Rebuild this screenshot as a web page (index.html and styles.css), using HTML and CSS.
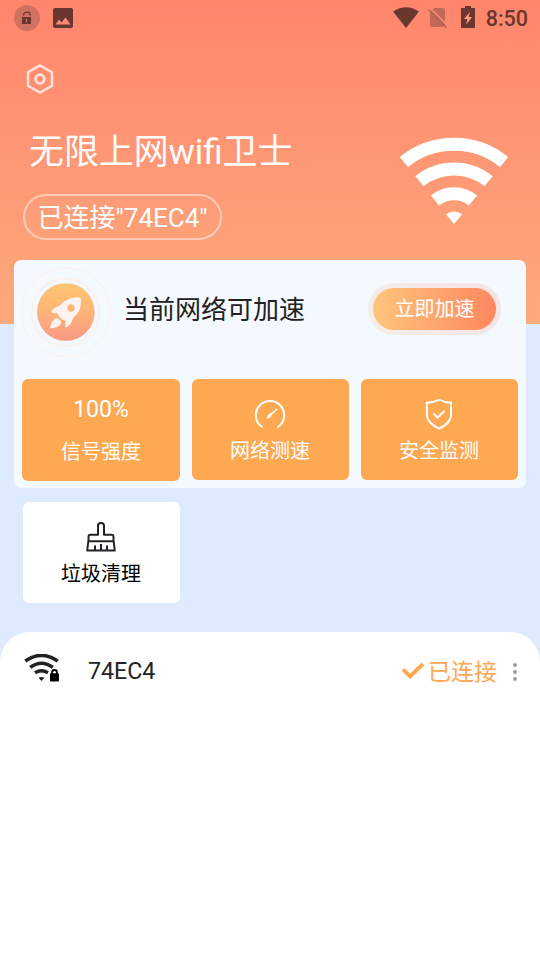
FILE: index.html
```html
<!DOCTYPE html>
<html lang="zh-CN">
<head>
<meta charset="utf-8">
<title>无限上网wifi卫士</title>
<link rel="stylesheet" href="styles.css">
</head>
<body>
<div class="screen">
  <header class="status">
    <svg class="status-lock" width="26" height="26" viewBox="0 0 26 26"><circle cx="13" cy="13" r="13" fill="#d07262"/><path d="M9.500 10.500v-.8a3.300 2.500 0 0 1 6.600 0v1" fill="none" stroke="#69372f" stroke-width="1.200"/><path d="M8 12h9v7H8z" fill="#69372f"/><path d="M12.500 14v3.500" stroke="#d07262" stroke-width="1.300"/></svg>
    <svg class="status-image" width="20" height="20" viewBox="0 0 20 20"><rect width="20" height="20" rx="2" fill="#69372f"/><path d="M2.500 16.500l3.500-5 2.500 3 4-5 5 7z" fill="#ff8a70"/></svg>
    <svg class="status-wifi" width="26" height="21" viewBox="0 0 26 21"><path d="M0 4.500Q13-4 26 4.500L13 21z" fill="#69372f"/></svg>
    <svg class="status-sim" width="20" height="21" viewBox="0 0 20 21"><path d="M6 0h9q2 0 2 2v15q0 2-2 2H4q-2 0-2-2V4z" fill="#c3695a"/><path d="M2 0l18 18" stroke="#ff896f" stroke-width="1.500"/><path d="M.5 1.500l18 18" stroke="#b86052" stroke-width="1.500"/></svg>
    <svg class="status-battery" width="14" height="22" viewBox="0 0 14 22"><path d="M0 2h4V0h6v2h4v20H0z" fill="#69372f"/><path d="M9 6L3 13h3.500l-1.500 6 6-8H7.500z" fill="#ff9a80"/></svg>
    <span class="clock">8:50</span>
  </header>

  <section class="hero">
    <div class="hero-copy">
      <svg class="settings" width="28" height="32" viewBox="0 0 28 32"><path d="M14 2.500l12 6.700v13.600l-12 6.700-12-6.700V9.200z" fill="none" stroke="#ffe2dc" stroke-width="2.500"/><circle cx="14" cy="16" r="4.300" fill="none" stroke="#ffe2dc" stroke-width="2.700"/></svg>
      <h1>无限上网wifi卫士</h1>
      <div class="connection">已连接"74EC4"</div>
    </div>
    <svg class="hero-wifi" width="110" height="88" viewBox="-55 -87 110 88"><g fill="none" stroke="#fff" stroke-width="13"><path d="M-50.100-61.900A79.600 79.600 0 0 1 50.100-61.900"/><path d="M-34.600-42.700A55 55 0 0 1 34.600-42.700"/><path d="M-19-23.500A30.200 30.200 0 0 1 19-23.500"/></g><path d="M0 0L-8-9.500A12.400 12.400 0 0 1 8-9.500z" fill="#fff"/></svg>
  </section>

  <main>
    <section class="panel">
      <div class="boost">
        <svg class="rocket" width="90" height="91" viewBox="63 50 270 273"><defs><linearGradient id="disc" x2="0" y2="1"><stop stop-color="#fec574"/><stop offset=".4" stop-color="#feb875"/><stop offset="1" stop-color="#f99986"/></linearGradient></defs><g fill="none" stroke="#faf0ed"><circle cx="198" cy="186" r="133" stroke-width="3"/><circle cx="197" cy="186" r="101" stroke-width="5"/></g><circle cx="197.500" cy="185" r="86.500" fill="url(#disc)"/><path fill="#fff3ef" fill-rule="evenodd" d="M242 142C218 139 196 147 183 162L178 167C169 168 161 175 153 184Q160 190 172 188C174 198 186 210 197 212Q193 223 197 232C209 226 215 217 218 206L222 200C239 185 245 170 242 142ZM213 162a11 11 0 1 1 0 22a11 11 0 0 1 0-22Z"/><path fill="#fff3ef" d="M150 234C152 219 158 208 169 203Q181 206 184 217C179 228 170 232 150 234Z"/></svg>
        <h2>当前网络可加速</h2>
        <button class="boost-button" type="button">立即加速</button>
      </div>
      <div class="tiles">
        <div class="tile tile-signal"><span class="percent">100%</span><span class="label">信号强度</span></div>
        <div class="tile">
          <svg width="34" height="32" viewBox="0 0 34 32"><path d="M9.500 29.200A14.200 14.200 0 1 1 24.500 29.200" fill="none" stroke="#fff" stroke-width="2"/><path d="M16.500 18L24 11" stroke="#fff" stroke-width="1.700"/><path d="M13.500 21l1-3.500 3.800-3 1 1.300-2.300 4z" fill="#fff"/></svg>
          <span class="label">网络测速</span>
        </div>
        <div class="tile">
          <svg width="34" height="32" viewBox="0 0 34 32"><path d="M17 1.900Q23 4.500 29 4.800V18Q28 25.500 17 30.600Q6 25.500 5 18L4.800 4.800Q11 4.500 17 1.900Z" fill="none" stroke="#fff" stroke-width="2"/><path d="M11.500 15.500l4 4 7-6.500" fill="none" stroke="#fff" stroke-width="2"/></svg>
          <span class="label">安全监测</span>
        </div>
      </div>
    </section>

    <div class="tile tile-clean">
      <svg width="34" height="32" viewBox="0 0 34 32"><g fill="none" stroke="#222326" stroke-width="2"><path d="M14 13.800V4.500Q14 2 17 2T20 4.500V13.800H27.500Q29.500 13.800 29.500 16V19L30.800 29.500H3.200L4.500 19V16Q4.500 13.800 6.500 13.800Z" stroke-linejoin="round"/><path d="M4.500 20.200H29.500M11 29v-4.500M17 29v-6M23 29v-4.500"/></g></svg>
      <span class="label">垃圾清理</span>
    </div>
  </main>

  <section class="networks">
    <div class="network">
      <svg class="secured" width="36" height="28" viewBox="0 0 36 28"><g fill="none" stroke="#222"><path d="M1.300 7Q17.500-4.200 33.700 7" stroke-width="3.600"/><path d="M6.200 13.300Q17.500 5 28.800 13.300" stroke-width="3.400"/><path d="M11 18.700Q17.500 14.800 24 18.700" stroke-width="3.400"/></g><path d="M14.500 23.700Q17.500 22.200 20.500 23.700L17.500 27z" fill="#222"/><rect x="25.300" y="16" width="10" height="12" rx="2" fill="#fff"/><rect x="26" y="19.300" width="9" height="8.200" rx="1" fill="#000"/><path d="M28 20v-1.500a2.500 2.500 0 0 1 5 0V20" fill="none" stroke="#000" stroke-width="1.800"/></svg>
      <span class="ssid">74EC4</span>
      <svg class="check" width="24" height="18" viewBox="0 0 24 18"><path d="M1.800 7.300l7.300 7L22 2" fill="none" stroke="#fea652" stroke-width="3.900"/></svg>
      <span class="state">已连接</span>
      <svg class="more" width="4" height="20" viewBox="0 0 4 20" fill="#999"><circle cx="2" cy="3" r="1.900"/><circle cx="2" cy="10" r="1.900"/><circle cx="2" cy="17" r="1.900"/></svg>
    </div>
  </section>
</div>
</body>
</html>
```

FILE: styles.css
```css
* { box-sizing: border-box; }

body {
  margin: 0;
  font-family: Roboto, "Noto Sans CJK SC", sans-serif;
  color: #222;
}

svg { display: block; flex: none; }

.screen {
  display: flex;
  flex-direction: column;
  width: 540px;
  height: 960px;
  overflow: hidden;
  background: linear-gradient(#ff856d, #fdaa7c) 0 0 / 100% 324px no-repeat #deebff;
}

.status {
  display: flex;
  align-items: center;
  height: 36px;
  padding: 0 12px 0 14px;
}

.status-image { margin-left: 13px; }
.status-wifi { margin: -2px 9px 0 auto; }
.status-sim { margin-top: 1px; }
.status-battery { margin: -2px 11px 0 13px; }
.clock {
  padding-top: 2px;
  font-size: 21.500px;
  font-weight: 500;
  line-height: 26px;
  color: #69372f;
}

.hero {
  display: flex;
  justify-content: space-between;
  height: 224px;
  padding: 27px 31.500px 0 23px;
  color: #fff;
}

.settings { margin-left: 3px; }

h1 {
  margin: 33px 0 0 6px;
  font-size: 34.900px;
  font-weight: 400;
  line-height: 50px;
  white-space: nowrap;
}

.connection {
  width: 199px;
  height: 46px;
  margin-top: 16px;
  padding-left: 12.500px;
  border: 2px solid #ffcbb8;
  border-radius: 23px;
  font-size: 26px;
  line-height: 45px;
  white-space: nowrap;
}

.hero-wifi { margin-top: 74px; }

.panel {
  width: 512px;
  height: 228px;
  margin: 0 14px;
  padding: 0 8px;
  border-radius: 7px;
  background: #f4f9ff;
}

.boost {
  display: flex;
  height: 119px;
  padding-top: 6px;
}

.rocket { margin: .7px 0 0 -1px; }

h2 {
  margin: 23px 0 0 12px;
  font-size: 26px;
  font-weight: 400;
  line-height: 42px;
}

.boost-button {
  width: 133px;
  height: 52px;
  margin: 16.500px 17px 0 auto;
  padding: 2px 0 0;
  border: 5px solid transparent;
  border-radius: 26px;
  background:
    linear-gradient(90deg, #fec57b, #ff875f) padding-box,
    linear-gradient(90deg, #f5ede8, #f6e4e5) border-box;
  color: #fff;
  font-family: inherit;
  font-size: 20px;
  line-height: 39px;
}

.tiles {
  display: grid;
  grid-template-columns: 158px 157px 157px;
  gap: 12px;
  align-items: start;
}

.tile {
  display: flex;
  flex-direction: column;
  align-items: center;
  height: 101px;
  padding: 19px 1px 0 0;
  border-radius: 6px;
  background: #ffa852;
  color: #fff;
}

.tile svg { margin-left: -1px; }

.tile-signal { height: 102px; padding-right: 0; }

.label {
  margin-top: 6px;
  font-size: 20px;
  line-height: 30px;
}

.percent {
  height: 32px;
  font-size: 23px;
  line-height: 24px;
}

.tile-signal .label { margin-top: 7px; }

.tile-clean {
  width: 157px;
  margin: 14px 0 0 23px;
  background: #fff;
  color: #000;
}

.networks {
  flex: 1;
  margin-top: 29px;
  border-radius: 30px 30px 0 0;
  background: #fff;
}

.network {
  display: flex;
  align-items: center;
  height: 78px;
  padding: 0 23px 0 24px;
}

.secured { margin-top: -6px; }
.ssid { margin-left: 28px; font-size: 23.200px; }
.check { margin-left: auto; }
.state {
  margin: -3px 16px 0 3px;
  color: #fea652;
  font-size: 23px;
}
.more { margin-top: 2px; }
```
